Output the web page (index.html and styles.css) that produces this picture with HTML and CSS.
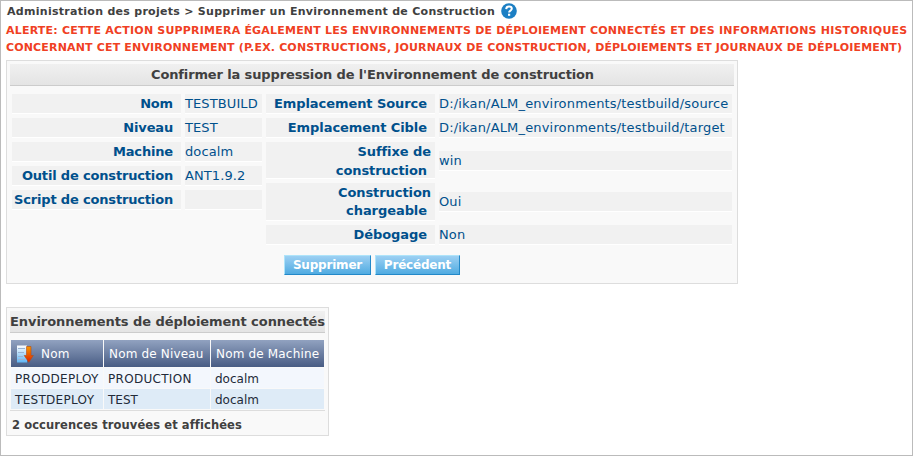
FILE: index.html
```html
<!DOCTYPE html>
<html lang="fr">
<head>
<meta charset="utf-8">
<title>Supprimer un Environnement de Construction</title>
<link rel="stylesheet" href="styles.css">
</head>
<body>
<header class="crumbs"><span>Administration des projets &gt; Supprimer un Environnement de Construction</span>
<svg class="help" viewBox="0 0 16 16"><circle cx="8" cy="8" r="7.8" fill="#1c7fc4"/><path d="M5.2 6.1C5.3 4.3 6.5 3.6 8 3.6c1.7 0 2.8.9 2.8 2.2 0 1.8-2.7 1.8-2.7 3.7" fill="none" stroke="#fff" stroke-width="2"/><rect x="7" y="10.7" width="2.2" height="2.1" fill="#fff"/></svg></header>
<div class="alert"><p class="alert-one">ALERTE: CETTE ACTION SUPPRIMERA ÉGALEMENT LES ENVIRONNEMENTS DE DÉPLOIEMENT CONNECTÉS ET DES INFORMATIONS HISTORIQUES</p><p class="alert-two">CONCERNANT CET ENVIRONNEMENT (P.EX. CONSTRUCTIONS, JOURNAUX DE CONSTRUCTION, DÉPLOIEMENTS ET JOURNAUX DE DÉPLOIEMENT)</p></div>
<section class="panel confirm">
<h2 class="title">Confirmer la suppression de l'Environnement de construction</h2>
<div class="groups">
<div class="fields left">
<div class="label">Nom</div><div class="value">TESTBUILD</div>
<div class="label">Niveau</div><div class="value">TEST</div>
<div class="label">Machine</div><div class="value">docalm</div>
<div class="label">Outil de construction</div><div class="value">ANT1.9.2</div>
<div class="label">Script de construction</div><div class="value"></div>
</div>
<div class="fields right">
<div class="label">Emplacement Source</div><div class="value path">D:/ikan/ALM_environments/testbuild/source</div>
<div class="label">Emplacement Cible</div><div class="value path">D:/ikan/ALM_environments/testbuild/target</div>
<div class="label two suffix"><span class="first">Suffixe de</span><span>construction</span></div><div class="value">win</div>
<div class="label two"><span class="first">Construction</span><span>chargeable</span></div><div class="value">Oui</div>
<div class="label">Débogage</div><div class="value">Non</div>
</div>
</div>
<div class="buttons"><button class="delete">Supprimer</button><button class="back">Précédent</button></div>
</section>
<section class="panel connected">
<h2 class="title">Environnements de déploiement connectés</h2>
<div class="table">
<div class="th"><svg class="sort" viewBox="0 0 18 18"><defs><linearGradient id="page" x2="0" y2="1"><stop stop-color="#fff"/><stop offset="1" stop-color="#5eb5f5"/></linearGradient><linearGradient id="arrow" x2="0" y2="1"><stop stop-color="#f59a00"/><stop offset="1" stop-color="#e02000"/></linearGradient></defs><path d="M1 .5h10v17H1z" fill="url(#page)"/><path d="M2 3.500h7M2 7.500h6M2 11.500h5M2 14.500h7" stroke="#9bb3d3"/><path d="M10.500 1.500h4.500V10.500h2.300L12.800 17.200 8.200 10.500h2.300z" fill="url(#arrow)" stroke="#b84a10" stroke-width=".6"/></svg><span>Nom</span></div><div class="th">Nom de Niveau</div><div class="th">Nom de Machine</div>
<div class="td">PRODDEPLOY</div><div class="td">PRODUCTION</div><div class="td low">docalm</div>
<div class="td even">TESTDEPLOY</div><div class="td even short">TEST</div><div class="td even low">docalm</div>
</div>
<p class="count">2 occurences trouvées et affichées</p>
</section>
</body>
</html>
```
FILE: styles.css
```css
* { box-sizing: border-box; }
body {
  margin: 0;
  height: 456px;
  padding: 0 0 0 5px;
  border: 1px solid #bbb;
  background: #fff;
  font-family: "DejaVu Sans", sans-serif;
  font-size: 13px;
  color: #404040;
  white-space: nowrap;
  overflow: hidden;
}
p, h2 { margin: 0; }
.crumbs { display: flex; align-items: center; gap: 6px; height: 20px; padding-left: 1px; font-size: 11px; font-weight: bold; letter-spacing: .285px; }
.help { width: 16px; height: 16px; }
.alert { height: 39px; padding-top: 1px; color: #f04023; font-size: 11px; font-weight: bold; line-height: 17px; }
.alert-one { letter-spacing: .205px; }
.alert-two { letter-spacing: .165px; }
.panel { border: 1px solid #ddd; background: #f9f9f9; padding: 3px; }
.confirm { width: 732px; height: 224px; }
.title {
  height: 22px;
  border-bottom: 1px solid #ccc;
  background: linear-gradient(#f0f0f0, #e4e4e4);
  font-size: 13px;
  line-height: 21px;
  text-align: center;
  letter-spacing: -.13px;
}
.confirm .title { padding-left: 1px; }
.groups { display: flex; gap: 4px; padding: 8px 2px 0; }
.fields { display: grid; gap: 4px; align-content: start; align-items: center; color: #00508c; line-height: 20px; }
.left { grid-template-columns: 169px 77px; grid-auto-rows: 20px; }
.right { grid-template-columns: 169px 293px; grid-template-rows: 20px 20px 37px 38px 20px; }
.label, .value { height: 20px; background: #f1f1f1; border-bottom: 1px solid #fff; }
.label { padding-right: 8px; text-align: right; font-weight: bold; letter-spacing: -.07px; }
.left .label { letter-spacing: -.17px; }
.value { letter-spacing: .1px; }
.path { letter-spacing: .17px; }
.two { display: flex; flex-direction: column; height: 100%; padding-top: 1px; line-height: 18px; }
.suffix { line-height: 19px; padding-top: 0; }
.two .first { margin-right: -4px; }
.buttons { display: flex; gap: 4px; padding: 10px 0 0 274px; }
button {
  height: 20px;
  padding: 0;
  border: 1px solid;
  border-color: #aee4fa #2288c8 #2288c8 #aee4fa;
  background: linear-gradient(#9cd0f3, #50abe1);
  color: #fff;
  font: bold 12px/18px "DejaVu Sans", sans-serif;
  letter-spacing: -.2px;
}
.delete { width: 87px; }
.back { width: 85px; }
.connected { width: 323px; height: 129px; margin-top: 23px; }
.connected .title { letter-spacing: -.06px; }
.table { display: grid; grid-template-columns: 92px 106px 113px; grid-template-rows: 27px 20px 20px; gap: 1px; margin-top: 7px; padding: 0 0 1px 1px; border-bottom: 1px solid #ddd; }
.th { display: flex; align-items: center; gap: 7px; padding-left: 5px; background: linear-gradient(#91a2c0, #485c84); color: #fff; font-size: 12px; letter-spacing: .17px; }
.sort { width: 18px; height: 18px; }
.td { padding-left: 4px; background: #f3f7fd; color: #222a38; font-size: 12px; line-height: 22px; letter-spacing: .3px; }
.low, .short { letter-spacing: 0; }
.even { background: #deebf7; }
.count { padding-left: 2px; font-size: 11.5px; font-weight: bold; line-height: 29px; letter-spacing: .1px; }
```
